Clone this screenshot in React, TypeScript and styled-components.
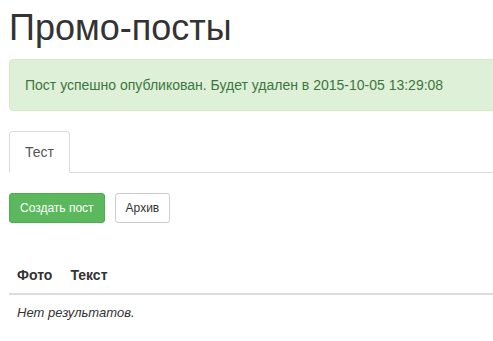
import React from "react";
import styled, { createGlobalStyle } from "styled-components";

const GlobalStyle = createGlobalStyle`
  html, body {
    margin: 0;
    padding: 0;
    overflow: hidden;
    background: #fff;
  }
  body {
    font-family: "Liberation Sans", Arial, Helvetica, sans-serif;
    font-size: 14px;
    line-height: 20px;
    color: #333;
  }
  * {
    box-sizing: border-box;
  }
`;

const Page = styled.div`
  width: 620px;
  padding: 8px 0 0 9px;
`;

const Title = styled.h1`
  margin: 0 0 11px;
  font-size: 36px;
  font-weight: 500;
  line-height: 1.1;
  color: #333;
`;

const Alert = styled.div`
  padding: 15px;
  margin-bottom: 20px;
  border: 1px solid #d6e9c6;
  border-radius: 4px;
  background: #dff0d8;
  color: #3c763d;
`;

const Tabs = styled.ul`
  display: flex;
  margin: 0 0 20px;
  padding: 0;
  list-style: none;
  border-bottom: 1px solid #ddd;
`;

const Tab = styled.li<{ active?: boolean }>`
  margin-bottom: -1px;
  padding: 10px 15px;
  border: 1px solid ${(p) => (p.active ? "#ddd" : "transparent")};
  border-bottom-color: ${(p) => (p.active ? "#fff" : "transparent")};
  border-radius: 4px 4px 0 0;
  background: ${(p) => (p.active ? "#fff" : "transparent")};
  color: #555;
  cursor: default;
`;

const Toolbar = styled.div`
  display: flex;
  gap: 10px;
  margin-bottom: 34px;
`;

const Button = styled.button<{ variant?: "success" | "default" }>`
  height: 30px;
  padding: 5px 10px;
  font-family: inherit;
  font-size: 12px;
  line-height: 18px;
  border-radius: 3px;
  border: 1px solid ${(p) => (p.variant === "success" ? "#4cae4c" : "#ccc")};
  background: ${(p) => (p.variant === "success" ? "#5cb85c" : "#fff")};
  color: ${(p) => (p.variant === "success" ? "#fff" : "#333")};
  cursor: pointer;
`;

const Table = styled.table`
  width: 100%;
  border-collapse: collapse;
  border-spacing: 0;
`;

const Th = styled.th<{ narrow?: boolean }>`
  width: ${(p) => (p.narrow ? "1px" : "auto")};
  padding: 8px ${(p) => (p.narrow ? "10px" : "8px")} 8px 8px;
  text-align: left;
  font-weight: bold;
  line-height: 20px;
  border-bottom: 2px solid #ddd;
  white-space: nowrap;
`;

const EmptyCell = styled.td`
  padding: 8px;
  font-size: 13px;
  line-height: 20px;
  font-style: italic;
`;

export default function App() {
  return (
    <>
      <GlobalStyle />
      <Page>
        <Title>Промо-посты</Title>
        <Alert>Пост успешно опубликован. Будет удален в 2015-10-05 13:29:08</Alert>
        <Tabs>
          <Tab active>Тест</Tab>
        </Tabs>
        <Toolbar>
          <Button variant="success">Создать пост</Button>
          <Button>Архив</Button>
        </Toolbar>
        <Table>
          <thead>
            <tr>
              <Th narrow>Фото</Th>
              <Th>Текст</Th>
            </tr>
          </thead>
          <tbody>
            <tr>
              <EmptyCell colSpan={2}>Нет результатов.</EmptyCell>
            </tr>
          </tbody>
        </Table>
      </Page>
    </>
  );
}
